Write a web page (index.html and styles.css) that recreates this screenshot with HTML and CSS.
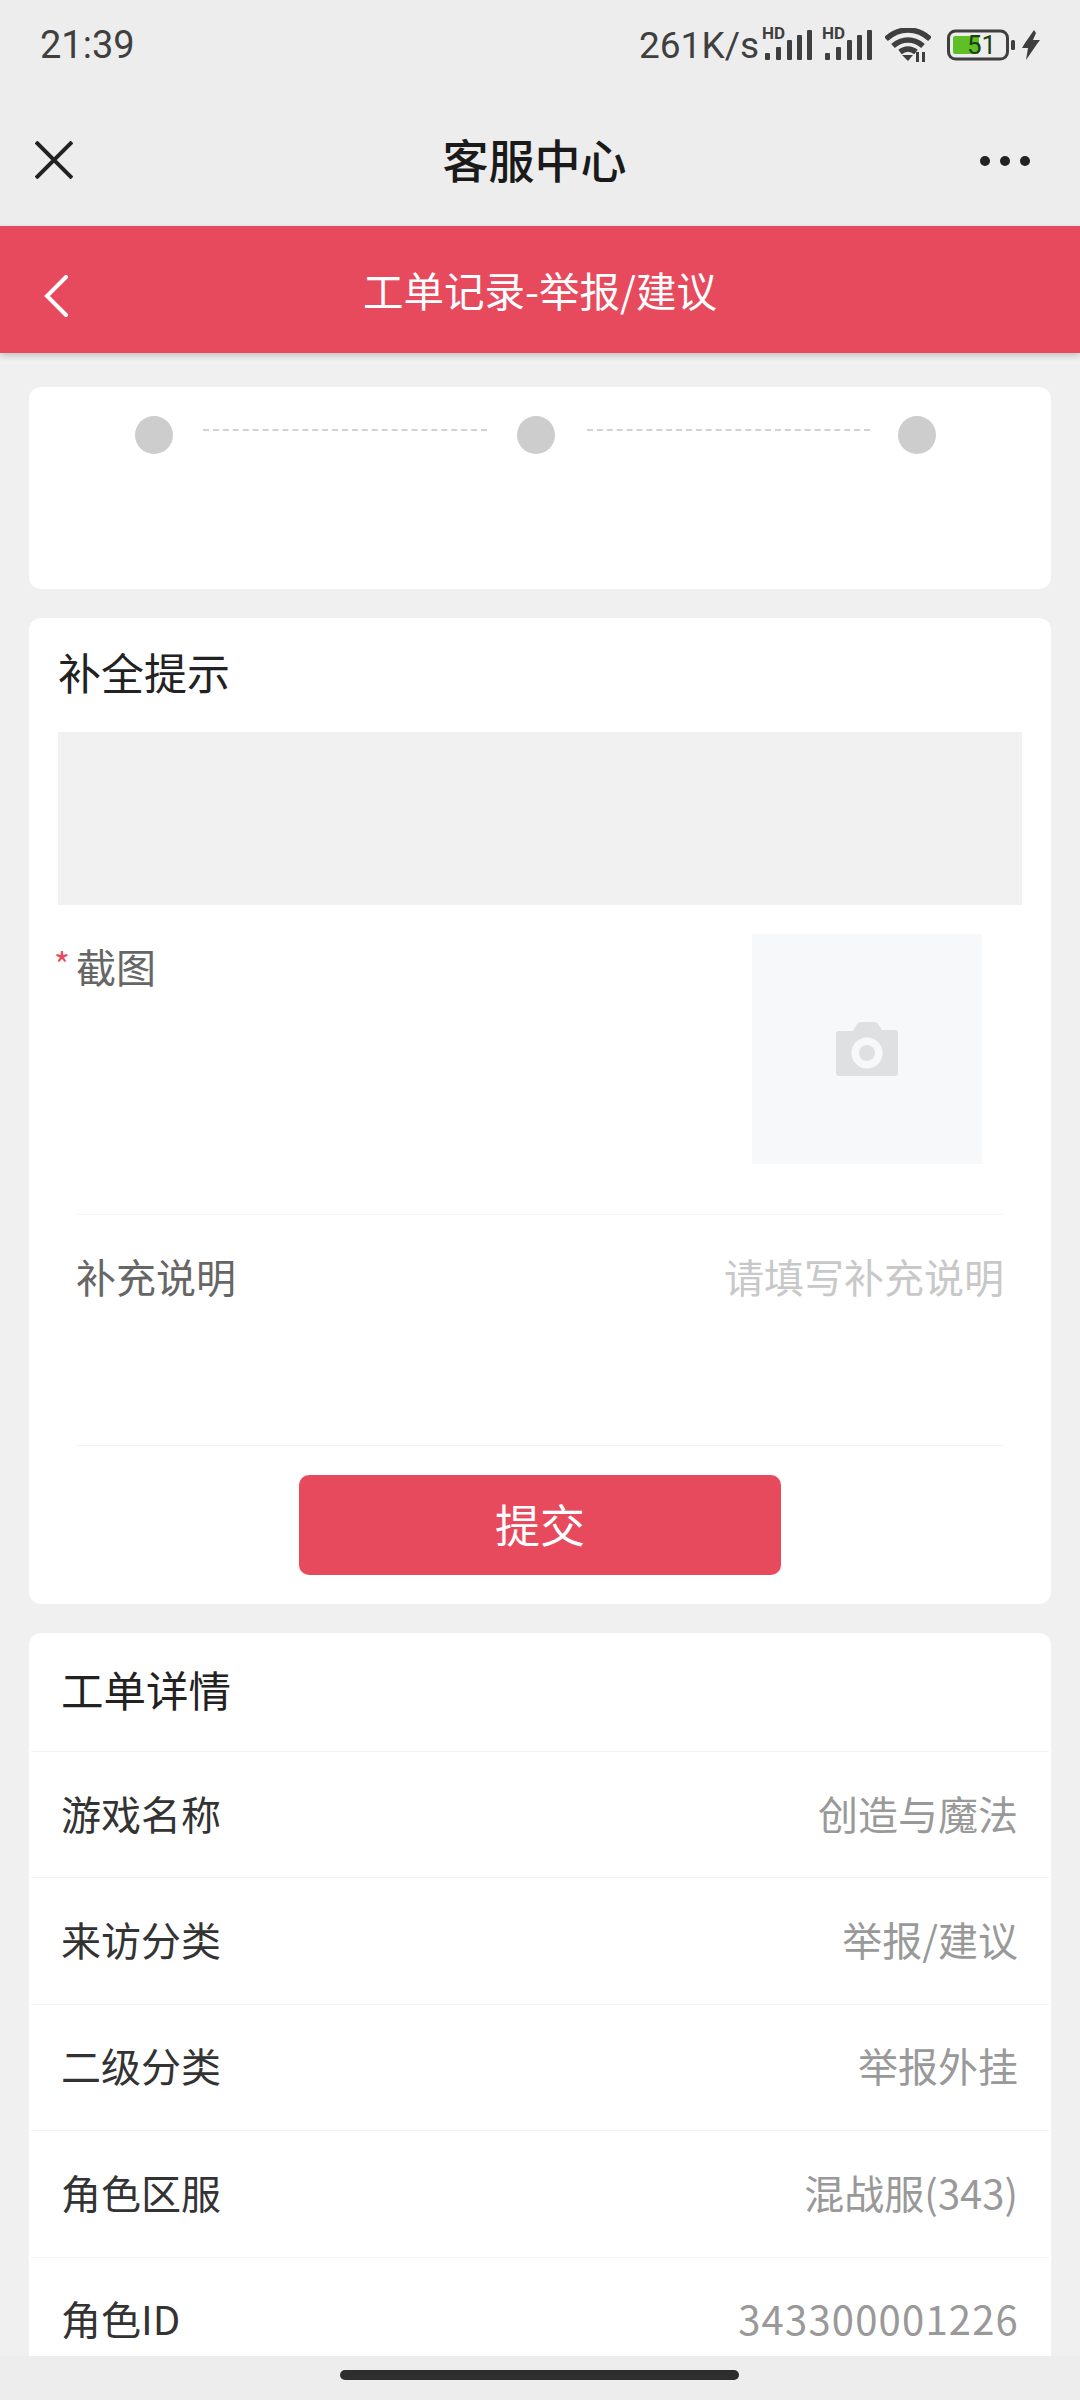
FILE: index.html
```html
<!DOCTYPE html>
<html lang="zh-CN">
  <head>
    <meta charset="utf-8">
    <title>客服中心</title>
    <link rel="stylesheet" href="styles.css">
  </head>
  <body>
    <div class="page">
      <header class="top">
        <div class="status">
          <span class="time">21:39</span>
          <div class="status-right">
            <span class="speed">261K/s</span>
            <svg class="signal" width="50" height="40" viewBox="0 -8 50 40">
              <text class="hd" x="0" y="10">HD</text>
              <rect x="3" y="24" width="5" height="7" rx="1"/>
              <rect x="14" y="18" width="5" height="13" rx="1"/>
              <rect x="25" y="11" width="5" height="20" rx="1"/>
              <rect x="35" y="6" width="5" height="25" rx="1"/>
              <rect x="45" y="1" width="5" height="30" rx="1"/>
            </svg>
            <svg class="signal" width="50" height="40" viewBox="0 -8 50 40">
              <text class="hd" x="0" y="10">HD</text>
              <rect x="3" y="24" width="5" height="7" rx="1"/>
              <rect x="14" y="18" width="5" height="13" rx="1"/>
              <rect x="25" y="11" width="5" height="20" rx="1"/>
              <rect x="35" y="6" width="5" height="25" rx="1"/>
              <rect x="45" y="1" width="5" height="30" rx="1"/>
            </svg>
            <svg class="wifi" width="46" height="34" viewBox="0 0 46 34">
              <path d="M1 11 C14 -1 32 -1 45 11" />
              <path d="M8 18 C17 10 29 10 38 18" />
              <path d="M15 24 C20 20 26 20 31 24" />
              <path class="fill" d="M17 27 L28 27 L23 33 Z" />
              <rect class="fill" x="31" y="24" width="3" height="10" />
              <rect class="fill" x="37" y="24" width="3" height="10" />
            </svg>
            <svg class="battery" width="70" height="32" viewBox="0 0 70 32">
              <rect class="shell" x="1.5" y="2" width="59" height="28" rx="7"/>
              <rect class="charge" x="6" y="7" width="26" height="18" rx="2"/>
              <text class="level" x="20" y="25">51</text>
              <rect class="tip" x="64" y="11" width="4" height="10" rx="1.5"/>
            </svg>
            <svg class="bolt" width="18" height="30" viewBox="0 0 18 30">
              <path d="M12 0 L3 13 L0 18 L6 18 L4 30 L15 14 L18 10 L11 10 L14 3 Z"/>
            </svg>
          </div>
        </div>
        <nav class="titlebar">
          <svg class="close" width="38" height="38" viewBox="0 0 38 38">
            <path d="M1 1 L37 37 M37 1 L1 37"/>
          </svg>
          <h1>客服中心</h1>
          <div class="more"><i></i><i></i><i></i></div>
        </nav>
      </header>

      <div class="redbar">
        <svg class="back" width="24" height="42" viewBox="0 0 24 42">
          <path d="M22 2 L3 21 L22 40"/>
        </svg>
        <h2>工单记录-举报/建议</h2>
      </div>

      <main class="content">
        <section class="card steps">
          <span class="dot"></span>
          <span class="dash"></span>
          <span class="dot"></span>
          <span class="dash"></span>
          <span class="dot"></span>
        </section>

        <section class="card">
          <h3 class="card-title">补全提示</h3>
          <div class="hint"></div>
          <div class="form-row shot-row">
            <label class="form-label"><span class="star">*</span>截图</label>
            <div class="upload">
              <svg width="62" height="54" viewBox="0 0 62 54">
                <path d="M3 9 H17 L21 2 Q22 0 25 0 H38 Q41 0 42 2 L46 8 H59 Q62 8 62 11 V51 Q62 54 59 54 H3 Q0 54 0 51 V12 Q0 9 3 9 Z" fill="#dfe0e2"/>
                <circle cx="31" cy="31" r="15.5" fill="#f7f8fa"/>
                <circle cx="31" cy="31" r="8" fill="#dfe0e2"/>
              </svg>
            </div>
          </div>
          <div class="form-row note-row">
            <label class="form-label note-label">补充说明</label>
            <span class="placeholder">请填写补充说明</span>
          </div>
          <div class="submit-wrap">
            <button class="submit">提交</button>
          </div>
        </section>

        <section class="card details">
          <h3 class="details-title">工单详情</h3>
          <div class="row"><span>游戏名称</span><span class="val">创造与魔法</span></div>
          <div class="row"><span>来访分类</span><span class="val">举报/建议</span></div>
          <div class="row"><span>二级分类</span><span class="val">举报外挂</span></div>
          <div class="row"><span>角色区服</span><span class="val">混战服(343)</span></div>
          <div class="row"><span>角色ID</span><span class="val num">343300001226</span></div>
        </section>
      </main>

      <footer class="homebar"><span class="pill"></span></footer>
    </div>
  </body>
</html>
```

FILE: styles.css
```css
html, body {
    margin: 0;
    padding: 0;
}
body {
    font-family: "Noto Sans CJK SC", "Noto Sans", sans-serif;
    background: #f0f0f0;
}
h1, h2, h3 {
    margin: 0;
    font-weight: normal;
}
.page {
    width: 1080px;
    height: 2400px;
    display: flex;
    flex-direction: column;
    overflow: hidden;
}

/* phone status bar + wechat title */
.top {
    background: #ededed;
    height: 226px;
    flex: none;
}
.status {
    height: 90px;
    padding: 0 40px;
    display: flex;
    justify-content: space-between;
    align-items: center;
    color: #3f3f3f;
    font-family: Roboto, sans-serif;
}
.time {
    font-size: 38px;
}
.status-right {
    display: flex;
    align-items: center;
}
.speed {
    font-size: 37px;
    margin-right: 3px;
}
.signal {
    fill: #3f3f3f;
    margin-right: 10px;
    margin-top: -8px;
}
.signal + .wifi {
    margin-left: 3px;
}
.hd {
    font-family: Roboto, sans-serif;
    font-size: 17px;
    font-weight: 700;
}
.wifi {
    margin-right: 16px;
}
.wifi path {
    fill: none;
    stroke: #3f3f3f;
    stroke-width: 5.5;
}
.wifi .fill {
    fill: #3f3f3f;
    stroke: none;
}
.battery {
    margin-right: 5px;
}
.shell {
    fill: none;
    stroke: #3f3f3f;
    stroke-width: 3;
}
.charge {
    fill: #5fbf27;
}
.level {
    font-family: Roboto, sans-serif;
    font-size: 26px;
    fill: #1f3f10;
}
.tip, .bolt {
    fill: #3f3f3f;
}

.titlebar {
    height: 136px;
    padding: 0 50px 0 35px;
    display: flex;
    align-items: center;
    justify-content: space-between;
}
.titlebar h1 {
    font-size: 46px;
    font-weight: 500;
    color: #1a1a1a;
    margin-left: 16px;
}
.close {
    fill: none;
    stroke: #222;
    stroke-width: 4;
    margin-top: 3px;
}
.more {
    display: flex;
    gap: 10px;
    margin-top: 6px;
}
.more i {
    width: 10px;
    height: 10px;
    border-radius: 50%;
    background: #222;
}

.redbar {
    flex: none;
    height: 127px;
    background: #e84a5d;
    box-shadow: 0 3px 6px rgba(0, 0, 0, 0.18);
    display: flex;
    align-items: center;
    justify-content: center;
    position: relative;
    color: #fff;
}
.redbar h2 {
    font-size: 40.5px;
}
.back {
    position: absolute;
    left: 44px;
    top: 49px;
    fill: none;
    stroke: #fff;
    stroke-width: 4;
    stroke-linecap: round;
}

.content {
    flex: 1;
    min-height: 0;
    overflow: hidden;
    padding: 34px 29px 0;
    display: flex;
    flex-direction: column;
    gap: 29px;
}
.card {
    flex: none;
    background: #fff;
    border-radius: 12px;
}

.steps {
    height: 202px;
    box-sizing: border-box;
    padding: 29px 115px 0 106px;
    display: flex;
    align-items: flex-start;
}
.dot {
    flex: none;
    width: 38px;
    height: 38px;
    border-radius: 50%;
    background: #cdcdcd;
}
.dash {
    flex: 1;
    margin: 13px 30px 0;
    border-top: 2px dashed #d2d2d2;
}
.dash:nth-child(4) {
    margin-left: 32px;
    margin-right: 28px;
}

.card-title {
    height: 114px;
    line-height: 106px;
    padding-left: 29px;
    font-size: 43px;
    color: #222;
}
.hint {
    height: 173px;
    margin: 0 29px;
    background: #f1f1f1;
}
.form-row {
    display: flex;
    justify-content: space-between;
    margin: 0 47px;
    border-bottom: 1px solid #f2f2f2;
    box-sizing: border-box;
}
.shot-row {
    height: 310px;
    padding: 29px 22px 0 0;
}
.note-row {
    height: 231px;
    padding-top: 32px;
}
.form-label {
    font-size: 40px;
    line-height: 58px;
    color: #666;
}
.shot-row .form-label {
    position: relative;
    top: 3px;
}
.star {
    position: absolute;
    left: -22px;
    top: -2px;
    color: #e84a5d;
    font-size: 34px;
}
.placeholder {
    font-size: 40px;
    line-height: 58px;
    color: #c8c8c8;
}
.upload {
    width: 230px;
    height: 230px;
    background: #f7f8fa;
    display: flex;
    align-items: center;
    justify-content: center;
}
.submit-wrap {
    display: flex;
    justify-content: center;
    padding: 29px 0;
}
.submit {
    width: 482px;
    height: 100px;
    padding: 0 0 4px;
    border: 0;
    border-radius: 10px;
    background: #e84a5d;
    color: #fff;
    font-family: inherit;
    font-size: 45px;
}

.details-title {
    height: 118px;
    line-height: 112px;
    padding-left: 32px;
    font-size: 42.5px;
    color: #222;
}
.row {
    height: 126.4px;
    box-sizing: border-box;
    margin: 0 2px;
    padding: 0 31px 4px 30px;
    border-top: 1px solid #f2f2f2;
    display: flex;
    align-items: center;
    justify-content: space-between;
    font-size: 40px;
    color: #333;
}
.val {
    color: #999;
}
.num {
    letter-spacing: 1.2px;
    margin-right: -1px;
}

.homebar {
    flex: none;
    height: 44px;
    background: #ededed;
    box-sizing: border-box;
    padding: 14px 2px 0 0;
    display: flex;
    justify-content: center;
}
.pill {
    width: 399px;
    height: 10px;
    border-radius: 5px;
    background: #2e2e2e;
}
```
